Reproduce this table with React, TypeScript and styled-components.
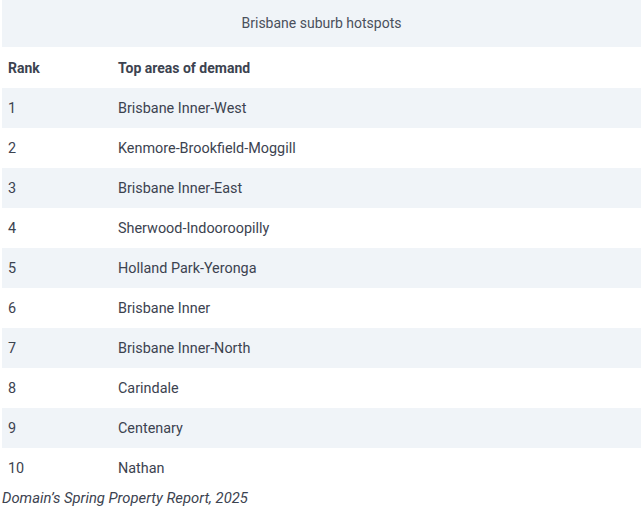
import React from 'react';
import styled, { createGlobalStyle } from 'styled-components';

const GlobalStyle = createGlobalStyle`
  body {
    margin: 0;
    background: #ffffff;
    font-family: Roboto, "Liberation Sans", sans-serif;
    color: #3c4350;
  }
`;

const Wrapper = styled.figure`
  margin: 0;
  padding: 0 0 0 2px;
`;

const Table = styled.table`
  width: 639px;
  border-collapse: collapse;
  font-size: 14.4px;
`;

const Caption = styled.caption`
  background: #f0f4f8;
  height: 47px;
  line-height: 47px;
  text-align: center;
  font-size: 14px;
  color: #4a505c;
`;

const HeadCell = styled.th<{ $width?: number }>`
  box-sizing: border-box;
  height: 41px;
  padding: 1px 6px 0;
  text-align: left;
  font-size: 14px;
  font-weight: 700;
  width: ${(p) => (p.$width ? `${p.$width}px` : 'auto')};
  color: #3c4350;
`;

const Row = styled.tr<{ $shaded: boolean }>`
  background: ${(p) => (p.$shaded ? '#f0f4f8' : '#ffffff')};
`;

const Cell = styled.td`
  box-sizing: border-box;
  height: 40px;
  padding: 1px 6px 0;
  color: #3c4350;
`;

const Source = styled.figcaption`
  font-style: italic;
  font-size: 14.8px;
  line-height: 18px;
  color: #3c4350;
  margin-top: 1px;
`;

const areas = [
  'Brisbane Inner-West',
  'Kenmore-Brookfield-Moggill',
  'Brisbane Inner-East',
  'Sherwood-Indooroopilly',
  'Holland Park-Yeronga',
  'Brisbane Inner',
  'Brisbane Inner-North',
  'Carindale',
  'Centenary',
  'Nathan',
];

const App: React.FC = () => (
  <>
    <GlobalStyle />
    <Wrapper>
      <Table>
        <Caption>Brisbane suburb hotspots</Caption>
        <thead>
          <tr>
            <HeadCell $width={110}>Rank</HeadCell>
            <HeadCell>Top areas of demand</HeadCell>
          </tr>
        </thead>
        <tbody>
          {areas.map((area, i) => (
            <Row key={area} $shaded={i % 2 === 0}>
              <Cell>{i + 1}</Cell>
              <Cell>{area}</Cell>
            </Row>
          ))}
        </tbody>
      </Table>
      <Source>Domain’s Spring Property Report, 2025</Source>
    </Wrapper>
  </>
);

export default App;
